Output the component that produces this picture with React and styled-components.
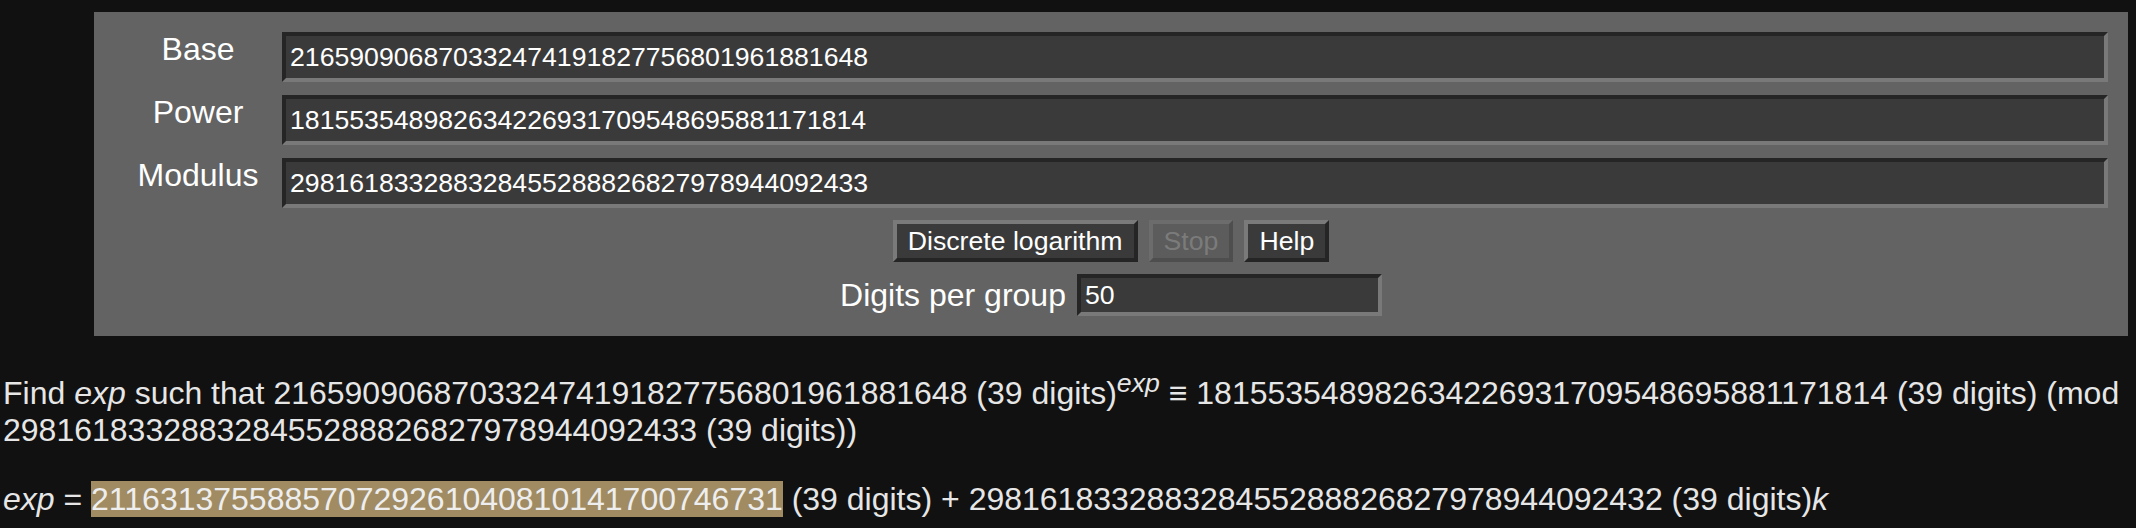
import React from "react";
import styled, { createGlobalStyle, css } from "styled-components";

const GlobalStyle = createGlobalStyle`
  html, body {
    margin: 0;
    padding: 0;
    background: #111111;
  }
  body {
    font-family: "Liberation Sans", Arial, Helvetica, sans-serif;
    color: #e6e6e6;
  }
`;

const Panel = styled.form`
  background: #636363;
  margin: 12px 8px 0 94px;
  padding: 20px;
`;

const FieldGrid = styled.div`
  display: grid;
  grid-template-columns: 168px 1fr;
  row-gap: 13px;
  align-items: start;
`;

const FieldLabel = styled.label`
  font-size: 32px;
  line-height: normal;
  color: #ffffff;
  text-align: center;
  margin-top: -1.5px;
`;

const inputBase = css`
  box-sizing: border-box;
  border-style: solid;
  border-width: 4px;
  border-color: #252525 #797979 #797979 #252525;
  background: #3a3a3a;
  color: #ffffff;
  font-family: "Liberation Sans", Arial, sans-serif;
  font-size: 26.67px;
  padding: 0 4px;
  margin: 0;
  outline: none;
`;

const NumberInput = styled.input`
  ${inputBase};
  width: 100%;
  height: 50px;
`;

const ButtonRow = styled.div`
  display: flex;
  justify-content: center;
  gap: 11px;
  margin-top: 12px;
`;

const Button = styled.button`
  box-sizing: border-box;
  height: 42px;
  padding: 0 11px;
  margin: 0;
  border-style: solid;
  border-width: 4px;
  font-family: "Liberation Sans", Arial, sans-serif;
  font-size: 26.67px;
  line-height: normal;
  ${(p) =>
    p.disabled
      ? css`
          background: #5c5c5c;
          color: #7b7b7b;
          border-color: #6c6c6c #4e4e4e #4e4e4e #6c6c6c;
        `
      : css`
          background: #3a3a3a;
          color: #ffffff;
          border-color: #7a7a7a #252525 #252525 #7a7a7a;
        `}
`;

const GroupRow = styled.div`
  display: flex;
  justify-content: center;
  align-items: center;
  gap: 11px;
  margin-top: 12px;
`;

const GroupLabel = styled.label`
  font-size: 32px;
  color: #ffffff;
`;

const GroupInput = styled.input`
  ${inputBase};
  width: 305px;
  height: 42px;
`;

const Result = styled.p`
  font-size: 32px;
  line-height: normal;
  margin: 32px 0;
  padding: 0 3px;
  color: #e6e6e6;
`;

const Var = styled.i`
  font-style: italic;
`;

const Highlight = styled.span`
  background: #a08b63;
  color: #eeeeee;
`;

const fields = [
  { label: "Base", value: "216590906870332474191827756801961881648" },
  { label: "Power", value: "181553548982634226931709548695881171814" },
  { label: "Modulus", value: "298161833288328455288826827978944092433" },
];

export default function App() {
  return (
    <>
      <GlobalStyle />
      <Panel onSubmit={(e) => e.preventDefault()}>
        <FieldGrid>
          {fields.map((f) => (
            <React.Fragment key={f.label}>
              <FieldLabel>{f.label}</FieldLabel>
              <NumberInput defaultValue={f.value} />
            </React.Fragment>
          ))}
        </FieldGrid>
        <ButtonRow>
          <Button type="button">Discrete logarithm</Button>
          <Button type="button" disabled>
            Stop
          </Button>
          <Button type="button">Help</Button>
        </ButtonRow>
        <GroupRow>
          <GroupLabel>Digits per group</GroupLabel>
          <GroupInput defaultValue="50" />
        </GroupRow>
      </Panel>
      <Result>
        Find <Var>exp</Var> such that 216590906870332474191827756801961881648 (39
        digits)<sup><Var>exp</Var></sup> ≡ 181553548982634226931709548695881171814 (39
        digits) (mod 298161833288328455288826827978944092433 (39 digits))
      </Result>
      <Result>
        <Var>exp</Var> = <Highlight>211631375588570729261040810141700746731</Highlight>{" "}
        (39 digits) + 298161833288328455288826827978944092432 (39 digits)
        <Var>k</Var>
      </Result>
    </>
  );
}
